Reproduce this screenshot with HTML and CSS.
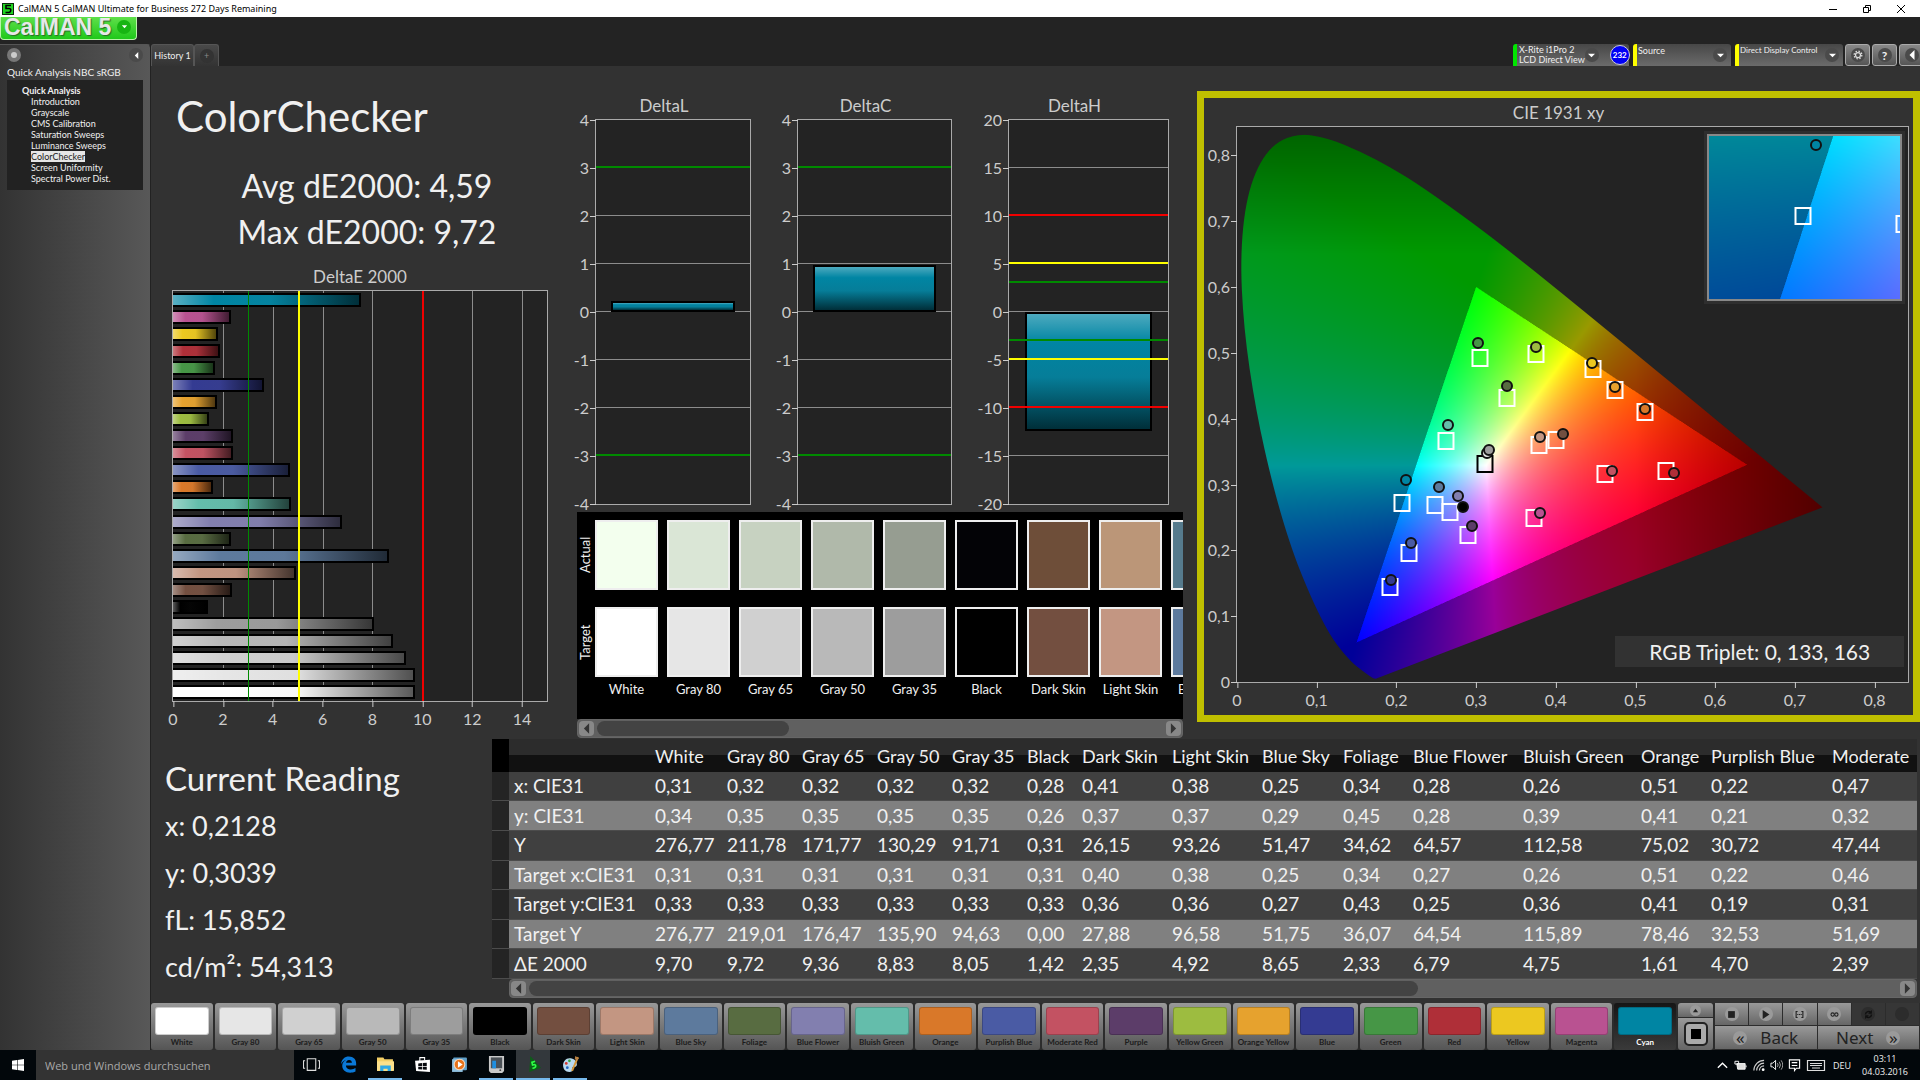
FILE: index.html
```html
<!DOCTYPE html>
<html lang="en">
<head>
  <meta charset="UTF-8" />
  <title>CalMAN 5 CalMAN Ultimate for Business 272 Days Remaining</title>
  <link rel="stylesheet" href="styles.css">
</head>
<body>

  <header class="titlebar">
    <svg class="titlebar-icon" viewBox="0 0 12 12"><rect width="12" height="12" fill="#0a2a0a"/><rect x="1" y="1" width="10" height="10" fill="#1fd41f"/><path d="M9 2.500H4v3h3.200q1.600 0 1.600 1.800T7 9.500H3.500" fill="none" stroke="#000" stroke-width="1.600"/></svg>
    <span class="titlebar-text">CalMAN 5 CalMAN Ultimate for Business 272 Days Remaining</span>
    <div class="window-buttons">
      <button aria-label="Minimize"><svg viewBox="0 0 10 10"><path d="M1 5.500h8"/></svg></button>
      <button aria-label="Restore"><svg viewBox="0 0 10 10"><path d="M1.500 3.500h5v5h-5zM3.500 3.500v-2h5v5h-2"/></svg></button>
      <button aria-label="Close"><svg viewBox="0 0 10 10"><path d="M1 1l8 8M9 1l-8 8"/></svg></button>
    </div>
  </header>

  <div class="logo-strip">
    <button class="logo">CalMAN 5 <span class="round"><svg viewBox="0 0 8 8"><path d="M1 2.500h6L4 6z"/></svg></span></button>
  </div>

  <div class="app">
    <aside class="sidebar">
      <div class="sidebar-tools">
        <button class="round record" aria-label="Record"><i></i></button>
        <button class="round" aria-label="Collapse"><svg viewBox="0 0 8 8"><path d="M6 0v8L2 4z"/></svg></button>
      </div>
      <h3>Quick Analysis NBC sRGB</h3>
      <nav class="tree">
        <strong>Quick Analysis</strong>
        <a href="#">Introduction</a>
        <a href="#">Grayscale</a>
        <a href="#">CMS Calibration</a>
        <a href="#">Saturation Sweeps</a>
        <a href="#">Luminance Sweeps</a>
        <a href="#" class="selected">ColorChecker</a>
        <a href="#">Screen Uniformity</a>
        <a href="#">Spectral Power Dist.</a>
      </nav>
    </aside>

    <main class="main">
      <div class="tabs">
        <button class="tab">History 1</button>
        <button class="tab tab-add" aria-label="Add history"><span class="round">+</span></button>
        <div class="devices">
          <div class="device green meter">
            <button class="device-name">X-Rite i1Pro 2<br>LCD Direct View</button>
            <span class="round"><svg viewBox="0 0 8 8"><path d="M0 2h8L4 6z"/></svg></span>
            <span class="badge">232</span>
          </div>
          <div class="device yellow source">
            <select aria-label="Source"><option>Source</option></select>
            <span class="round"><svg viewBox="0 0 8 8"><path d="M0 2h8L4 6z"/></svg></span>
          </div>
          <div class="device yellow display">
            <select aria-label="Display control"><option>Direct Display Control</option></select>
            <span class="round"><svg viewBox="0 0 8 8"><path d="M0 2h8L4 6z"/></svg></span>
          </div>
          <div class="tools">
            <button class="tool" aria-label="Settings"><span class="round"><svg viewBox="0 0 12 12"><circle cx="6" cy="6" r="3" fill="none" stroke="#ddd" stroke-width="1.500"/><circle cx="6" cy="6" r="4.600" fill="none" stroke="#ddd" stroke-width="1.600" stroke-dasharray="1.800 1.810"/></svg></span></button>
            <button class="tool" aria-label="Help"><span class="round">?</span></button>
            <button class="tool" aria-label="Back"><span class="round"><svg viewBox="0 0 8 8"><path d="M6 0v8L2 4z"/></svg></span></button>
          </div>
        </div>
      </div>

      <div class="workspace">
        <section class="summary">
          <h1>ColorChecker</h1>
          <p class="stat">Avg dE2000: 4,59</p>
          <p class="stat">Max dE2000: 9,72</p>
          <h2>DeltaE 2000</h2>
          <div class="plot" id="deltaE"></div>
        </section>

        <section class="middle">
          <div class="deltas" id="deltas"></div>
          <div class="swatches" id="swatches">
            <div class="swatch-names"><span>Actual</span><span>Target</span></div>
          </div>
          <div class="scrollbar short">
            <button aria-label="Scroll left"><svg viewBox="0 0 8 12"><path d="M7 0v12L1 6z"/></svg></button>
            <div class="track"><div class="thumb"></div></div>
            <button aria-label="Scroll right"><svg viewBox="0 0 8 12"><path d="M1 0v12l6-6z"/></svg></button>
          </div>
        </section>

        <section class="cie">
          <h2>CIE 1931 xy</h2>
          <div class="plot" id="cie">
            <canvas id="gamut"></canvas>
            <div class="inset" id="inset"><canvas id="zoom"></canvas></div>
            <div class="triplet">RGB Triplet: 0, 133, 163</div>
          </div>
        </section>
      </div>

      <div class="lower">
        <section class="reading">
          <h2>Current Reading</h2>
          <p>x: 0,2128</p>
          <p>y: 0,3039</p>
          <p>fL: 15,852</p>
          <p>cd/m²: 54,313</p>
        </section>
        <section class="results">
          <table id="results">
            <colgroup>
              <col class="w-gutter"><col class="w-label"><col class="w-72"><col class="w-75"><col class="w-75"><col class="w-75"><col class="w-75"><col class="w-55"><col class="w-90"><col class="w-90"><col class="w-81"><col class="w-70"><col class="w-110"><col class="w-118"><col class="w-70"><col class="w-121"><col>
            </colgroup>
            <thead></thead>
            <tbody></tbody>
          </table>
          <div class="scrollbar long">
            <button aria-label="Scroll left"><svg viewBox="0 0 8 12"><path d="M7 0v12L1 6z"/></svg></button>
            <div class="track"><div class="thumb"></div></div>
            <button aria-label="Scroll right"><svg viewBox="0 0 8 12"><path d="M1 0v12l6-6z"/></svg></button>
          </div>
        </section>
      </div>

      <div class="patchbar">
        <div class="patches" id="patches"></div>
        <div class="stepper">
          <button class="up" aria-label="Up"><span class="round"><svg viewBox="0 0 8 8"><path d="M1 6h6L4 2z"/></svg></span></button>
          <button class="window" aria-label="Pattern window"><i></i></button>
        </div>
        <div class="controls">
          <div class="transport">
            <button aria-label="Stop"><span class="round"><svg viewBox="0 0 8 8"><path d="M1 1h6v6H1z"/></svg></span></button>
            <button aria-label="Play"><span class="round"><svg viewBox="0 0 8 8"><path d="M1.500 0v8L7.500 4z"/></svg></span></button>
            <button aria-label="Read series"><span class="round"><svg viewBox="0 0 12 10"><path d="M3.500 1h-2v8h2M8.500 1h2v8h-2M3 5h1.500M5.300 5h1.500M7.500 5H9" fill="none" stroke="#222" stroke-width="1.500"/></svg></span></button>
            <button aria-label="Read continuous"><span class="round"><svg viewBox="0 0 12 8"><circle cx="3.500" cy="4" r="2.200" fill="none" stroke="#222" stroke-width="1.400"/><circle cx="8.500" cy="4" r="2.200" fill="none" stroke="#222" stroke-width="1.400"/></svg></span></button>
            <button class="off" aria-label="Refresh"><span class="round"><svg viewBox="0 0 12 12"><path d="M2 6a4 4 0 0 1 6.500-3M10 6a4 4 0 0 1-6.500 3" fill="none" stroke="#111" stroke-width="2"/><path d="M10.500 0v5h-5zM1.500 12V7h5z" fill="#111"/></svg></span></button>
            <button class="off" aria-label="Blank"><span class="round"></span></button>
          </div>
          <div class="steps">
            <button><span class="round">«</span>Back</button>
            <button>Next<span class="round">»</span></button>
          </div>
        </div>
      </div>
    </main>
  </div>

  <footer class="taskbar">
    <button class="start" aria-label="Start"><svg viewBox="0 0 12 12"><path d="M0 1.700l5-.7v4.700H0zM5.600.9L12 0v5.700H5.600zM0 6.300h5V11l-5-.7zM5.600 6.300H12V12l-6.400-.9z" fill="#fff"/></svg></button>
    <input class="search" type="text" aria-label="Search" placeholder="Web und Windows durchsuchen">
    <div class="apps">
      <button aria-label="Task view"><svg viewBox="0 0 16 16"><path d="M4 2.500h8v11H4zM2 4.500H.5v7H2M14 4.500h1.500v7H14" fill="none" stroke="#ddd"/></svg></button>
      <button aria-label="Edge"><svg viewBox="0 0 16 16"><path d="M1 7.500C1.500 3 4.500.5 8.300.5c4.500 0 6.900 3 6.900 6.600v1.800H5.600c.1 2.700 2.300 3.700 4.700 3.700 1.500 0 3-.4 4.300-1.200v3.200c-1.500.8-3.200 1.100-5 1.100-4.400 0-7.500-2.500-7.500-6.500C2.100 6.500 3.600 4.600 5.900 3.500 4 3.900 2.200 5.300 1 7.500zM5.700 6.400h5.500c0-1.700-.9-2.700-2.700-2.700S5.900 5 5.700 6.400z" fill="#0a78d7"/></svg></button>
      <button class="running" aria-label="Explorer"><svg viewBox="0 0 16 16"><path d="M0 1.500h6l1 1.500h8v11H0z" fill="#f3cf66"/><path d="M0 5h16v9H0z" fill="#fbe08b"/><path d="M3 14V9h10v5h-3v-2H6v2z" fill="#2fa9e6"/></svg></button>
      <button aria-label="Store"><svg viewBox="0 0 16 16"><path d="M1 4.500l14-1v11.500L2 14z" fill="#fff"/><path d="M5.500 5V1.500h4.500V4" fill="none" stroke="#fff"/><path d="M4 7l3.500-.3v2.600H4zM8.200 6.600L12 6.300v3H8.200zM4 10h3.500v2.700L4 12.500zM8.200 10H12v3l-3.800-.2z" fill="#05080c"/></svg></button>
      <button aria-label="Media player"><svg viewBox="0 0 16 16"><rect x="2" y="1.500" width="13" height="12" rx="1" fill="#5f9fc9"/><path d="M1 3h10v12H1z" fill="#8fc1e0"/><circle cx="8" cy="8" r="5" fill="#e8731b" stroke="#f5d9c0"/><path d="M6.500 5v6l4.500-3z" fill="#fff"/></svg></button>
      <button class="running" aria-label="Display utility"><svg viewBox="0 0 16 18"><path d="M0 0h16v16l-2 2H2l-2-2z" fill="#c9c9c9"/><path d="M2 1.500h12V13H2z" fill="#4b5157"/><path d="M3.500 5h4v8h-4z" fill="#1f8fe0"/><circle cx="12" cy="15" r="1" fill="#444"/></svg></button>
      <button class="running active" aria-label="CalMAN"><svg viewBox="0 0 16 16"><path d="M5 0l10 11-11 4z" fill="#0c5f17"/><path d="M9.500 5L6.500 6l.6 2.400q3-.8 3 1T7 11.500" fill="none" stroke="#2dff45" stroke-width="1.500"/></svg></button>
      <button class="running" aria-label="Paint"><svg viewBox="0 0 16 16"><path d="M7 2c4 0 7 2.300 7 6 0 2-1.500 2.400-3 2.400s-1.600 1.300-1 2.300c.4 1.500-1 2.300-3 2.300-4 0-6-3-6-6.300S3.500 2 7 2z" fill="#b8d8ee"/><circle cx="4" cy="7" r="1.300" fill="#d43a2f"/><circle cx="7" cy="4.500" r="1.300" fill="#3aa640"/><circle cx="5" cy="11" r="1.300" fill="#2568c0"/><path d="M15 1L9.500 14" stroke="#d69638" stroke-width="1.800"/><path d="M12.500 0L16 2l-1.500 2-2.500-1z" fill="#b57f43"/></svg></button>
    </div>
    <div class="tray">
      <svg viewBox="0 0 14 14"><path d="M2 10l5-5 5 5" fill="none" stroke="#fff" stroke-width="1.500"/></svg>
      <svg viewBox="0 0 14 14"><path d="M3 5.500h9v6H4z" fill="#ddd" stroke="#fff"/><path d="M1 3h4v3H1zM13 7.500v2" fill="none" stroke="#fff"/></svg>
      <svg viewBox="0 0 14 14"><path d="M2 13A11 11 0 0 1 13 2M5 13a8 8 0 0 1 8-8M8 13a5 5 0 0 1 5-5" fill="none" stroke="#ccc" stroke-width="1.300"/><circle cx="12" cy="12" r="1.500" fill="#fff"/></svg>
      <svg viewBox="0 0 14 14"><path d="M1 5h2l3-3v10L3 9H1z" fill="none" stroke="#fff"/><path d="M8 5q1.500 2 0 4M10 3.500q2.500 3.500 0 7M12 2q3.500 5 0 10" fill="none" stroke="#aaa"/></svg>
      <svg viewBox="0 0 14 14"><path d="M1.500 1.500h11v9H9l-2 2.500v-2.500H1.500zM4 4.500h6M4 7.500h6" fill="none" stroke="#fff" stroke-width="1.200"/></svg>
      <svg class="keyboard" viewBox="0 0 20 14"><path d="M1.500 2.500h17v10h-17zM4 5.500h12M4 7.500h12M6 10h8" fill="none" stroke="#ddd" stroke-width="1.200" /></svg>
      <span>DEU</span>
      <time>03:11<br>04.03.2016</time>
    </div>
  </footer>

  <script src="script.js"></script>
</body>
</html>
```
FILE: styles.css
```css
* {
  margin: 0;
  padding: 0;
  box-sizing: border-box;
}

body {
  display: flex;
  flex-direction: column;
  height: 100vh;
  overflow: hidden;
  font-family: Lato, 'Open Sans', sans-serif;
  font-size: 9px;
  background: #232323;
  color: #f0f0f0;
}

button, select, input {
  font: inherit;
  color: inherit;
  border: none;
  background: none;
}

h1, h2, h3 {
  font-weight: normal;
}

svg {
  display: block;
}

/* title bar */
.titlebar {
  display: flex;
  align-items: center;
  height: 17px;
  padding-left: 2px;
  background: #fff;
  color: #000;
  font-family: 'Open Sans', sans-serif;
}

.titlebar-icon {
  width: 12px;
  height: 12px;
  margin-right: 4px;
}

.titlebar-text {
  font-family: 'Noto Sans', sans-serif;
}

.window-buttons {
  display: flex;
  gap: 24px;
  margin-left: auto;
  padding-right: 14px;
}

.window-buttons svg {
  width: 10px;
  height: 10px;
  fill: none;
  stroke: #000;
}

.logo-strip {
  height: 27px;
}

.logo {
  display: flex;
  align-items: center;
  justify-content: space-between;
  width: 137px;
  height: 23px;
  padding: 0 5px 3px 3px;
  border: 1px solid #b9f5a9;
  border-top: none;
  border-radius: 0 0 4px 4px;
  background: linear-gradient(#5fe04a, #1fc81a);
  color: #e8e8e8;
  font-family: 'Liberation Sans', sans-serif;
  font-size: 23px;
  line-height: 20px;
  font-weight: bold;
  white-space: nowrap;
  text-shadow: 1px 1px 1px #2a6a2a;
}

.logo .round {
  background: #17b512;
}

.round {
  display: inline-flex;
  flex: none;
  align-items: center;
  justify-content: center;
  width: 14px;
  height: 14px;
  border-radius: 50%;
  background: #4a4a4a;
}

.round svg {
  width: 7px;
  height: 7px;
  fill: #fff;
}

/* sidebar */
.app {
  display: flex;
  flex: 1;
  min-height: 0;
}

.sidebar {
  width: 151px;
  padding: 3px 7px 0 7px;
  border-top: 1px solid #555;
  border-right: 1px solid #222;
  border-radius: 0 4px 0 0;
  background: linear-gradient(90deg, #333, #585858);
}

.sidebar-tools {
  display: flex;
  justify-content: space-between;
}

.record {
  background: #777;
}

.record i {
  width: 6px;
  height: 6px;
  border-radius: 50%;
  background: #ccc;
}

.sidebar h3 {
  margin: 2px 0 0;
  font-size: 10px;
  line-height: 16px;
  white-space: nowrap;
}

.tree {
  display: flex;
  flex-direction: column;
  align-items: flex-start;
  height: 110px;
  padding: 5px 0 0 15px;
  background: #222;
  line-height: 11px;
}

.tree a {
  margin-left: 9px;
  color: #f0f0f0;
  text-decoration: none;
}

.tree .selected {
  background: #e6e6e6;
  color: #222;
}

/* tabs and device row */
.main {
  display: flex;
  flex: 1;
  flex-direction: column;
  min-width: 0;
}

.tabs {
  display: flex;
  height: 22px;
}

.tab {
  width: 43px;
  border: 1px solid #555;
  border-bottom: none;
  border-radius: 3px 3px 0 0;
  background: linear-gradient(#494949, #333);
  white-space: nowrap;
}

.tab-add {
  width: 25px;
  color: #888;
}

.tab-add .round {
  background: #333;
}

.devices {
  display: flex;
  gap: 4px;
  margin-left: auto;
}

.device {
  display: flex;
  align-items: center;
  padding-right: 4px;
  border-left: 4px solid #ffff00;
  border-radius: 3px 3px 0 0;
  background: linear-gradient(#474747, #6b6b6b);
}

.device.green {
  border-color: #00e600;
}

.meter {
  width: 116px;
  padding-right: 1px;
}

.source {
  width: 98px;
}

.display {
  width: 108px;
}

.device-name {
  margin-right: auto;
  padding-left: 2px;
  line-height: 10px;
  text-align: left;
  white-space: nowrap;
}

.device select {
  flex: 1;
  min-width: 0;
  height: 22px;
  padding: 0 0 10px 1px;
  appearance: none;
  outline: none;
}

.display select {
  font-size: 8px;
}

.badge {
  display: flex;
  flex: none;
  align-items: center;
  justify-content: center;
  width: 20px;
  height: 20px;
  margin-left: 11px;
  border: 1px solid #ccd;
  border-radius: 50%;
  background: #0000f5;
  color: #fff;
  font-size: 8px;
  font-weight: bold;
}

.tools {
  display: flex;
  gap: 2px;
  margin-left: -2px;
  margin-right: -4px;
}

.tool {
  width: 25px;
  border: 1px solid #aaa;
  border-radius: 3px;
  background: linear-gradient(#888, #555);
  font-size: 12px;
  font-weight: bold;
}

.tool .round svg {
  width: 10px;
  height: 10px;
}

/* workspace */
.workspace {
  display: grid;
  flex: 673;
  grid-template-columns: 426fr 606fr 737fr;
  min-height: 0;
  background: #323232;
}

.summary {
  display: flex;
  flex-direction: column;
  min-width: 0;
  padding: 24px 29px 37px 21px;
}

h1 {
  padding-left: 4px;
  font-size: 42px;
  line-height: 52px;
  margin-bottom: 21px;
}

.stat {
  padding-left: 14px;
  font-size: 32px;
  line-height: 46px;
  text-align: center;
}

.summary h2 {
  margin-top: 9px;
}

.workspace h2 {
  color: #ccc;
  font-size: 17px;
  line-height: 26px;
  text-align: center;
}

.plot {
  position: relative;
  flex: 1;
  min-height: 0;
  border: 1px solid #aaa;
  background: #232323;
}

.line {
  position: absolute;
  background: #8c8c8c;
}

.line.v {
  top: 0;
  bottom: 0;
  width: 1px;
}

.line.h {
  left: 0;
  right: 0;
  height: 1px;
}

.line.good {
  background: #008a00;
}

.line.warn {
  background: #ffff00;
}

.line.bad {
  background: #f00000;
}

.line.v.warn, .line.v.bad {
  width: 2px;
}

.line.h.warn, .line.h.bad, .line.h.good {
  height: 2px;
}

.tick {
  position: absolute;
  color: #ccc;
  font-size: 16px;
  line-height: 20px;
}

.tick.x {
  top: 100%;
  padding-top: 8px;
  transform: translateX(-50%);
}

.tick.y {
  right: 100%;
  padding-right: 7px;
  transform: translateY(50%);
}

.tick::after {
  content: '';
  position: absolute;
  background: #ccc;
}

.tick.x::after {
  top: 0;
  left: 50%;
  width: 1px;
  height: 6px;
}

.tick.y::after {
  top: 50%;
  right: 0;
  width: 6px;
  height: 1px;
}

.bars {
  display: flex;
  flex-direction: column;
  justify-content: space-around;
  position: relative;
  height: 100%;
}

.hbar {
  height: 14px;
  border: 2px solid #000;
  border-left: none;
  background-image: linear-gradient(90deg, rgba(255,255,255,.35), rgba(255,255,255,0) 22%, rgba(90,90,90,.05) 52%, rgba(0,0,0,.65));
}

/* delta charts */
.middle {
  display: flex;
  flex-direction: column;
  min-width: 0;
}

.deltas {
  display: grid;
  grid-template-columns: 174fr 173fr 189fr;
  gap: 28px;
  flex: 1;
  padding: 27px 14px 7px 0;
}

.delta {
  display: flex;
  flex-direction: column;
}

.delta .plot {
  margin-left: 18px;
}

.delta:last-child .plot {
  margin-left: 28px;
}

.vbar {
  position: absolute;
  left: 10%;
  right: 10%;
  border: 2px solid #000;
  background: linear-gradient(rgba(255,255,255,.3), rgba(255,255,255,0) 25%, rgba(60,60,60,.1) 55%, rgba(0,0,0,.65)) #0085a3;
}

/* actual / target swatches */
.swatches {
  display: flex;
  gap: 9px;
  height: 207px;
  padding-top: 8px;
  overflow: hidden;
  background: #000;
}

.swatch-names {
  display: flex;
  flex: none;
  flex-direction: column;
  gap: 17px;
  width: 9px;
}

.swatch-names span {
  height: 70px;
  writing-mode: vertical-rl;
  transform: rotate(180deg);
  font-size: 13px;
  line-height: 16px;
  text-align: center;
}

.swatch {
  display: flex;
  flex: none;
  flex-direction: column;
  width: 63px;
  font-size: 13px;
  line-height: 24px;
  text-align: center;
  white-space: nowrap;
}

.swatch i {
  height: 70px;
  border: 2px solid #eee;
}

.swatch i + i {
  margin-top: 17px;
}

.scrollbar {
  display: flex;
  height: 19px;
  padding: 1px;
  border: 1px solid #666;
  border-radius: 4px;
  background: #606060;
}

.middle .scrollbar {
  margin-bottom: 1px;
}

.scrollbar button {
  display: flex;
  align-items: center;
  justify-content: center;
  width: 15px;
  border-radius: 4px;
  background: #888;
}

.scrollbar svg {
  width: 7px;
  height: 11px;
  fill: #333;
}

.track {
  flex: 1;
  padding: 0 3px;
}

.thumb {
  height: 100%;
  border-radius: 8px;
  background: #434343;
}

.short .thumb {
  width: 34%;
}

.long .thumb {
  width: 65%;
}

/* CIE chart */
.cie {
  display: flex;
  flex-direction: column;
  min-width: 0;
  margin: 25px 0 17px 14px;
  padding: 0 4px 32px 32px;
  border: 7px solid #bfbf00;
}

.cie h2 {
  margin-left: -28px;
  padding-top: 2px;
}

#gamut, #zoom {
  display: block;
  width: 100%;
  height: 100%;
}

#cie > canvas {
  position: absolute;
  inset: 0;
}

.inset {
  position: absolute;
  top: 7px;
  right: 6px;
  width: 29%;
  height: 30%;
  overflow: hidden;
  border: 2px solid #888;
  outline: 3px solid #2e2e2e;
}

.triplet {
  position: absolute;
  right: 4px;
  bottom: 15px;
  width: 43%;
  background: #323232;
  font-size: 21px;
  line-height: 31px;
  text-align: center;
}

.target, .measured {
  position: absolute;
  transform: translate(-50%, 50%);
}

.target {
  width: 17px;
  height: 18px;
  border: 2px solid #fff;
}

.target.white {
  border-color: #000;
}

.measured {
  width: 12px;
  height: 12px;
  border: 2px solid #111;
  border-radius: 50%;
}

/* reading and results table */
.lower {
  display: flex;
  flex: 264;
  min-height: 0;
  background: #323232;
}

.reading {
  width: 341px;
  padding: 16px 0 0 14px;
  font-size: 27px;
  line-height: 47px;
}

.reading h2 {
  font-size: 33px;
}

.results {
  flex: 1;
  min-width: 0;
  padding-right: 3px;
}

.results table {
  width: 100%;
  height: 240px;
  table-layout: fixed;
  border-collapse: collapse;
  font-size: 19px;
  text-align: left;
}

.results th, .results td {
  overflow: hidden;
  padding-left: 5px;
  font-weight: normal;
  line-height: 20px;
  white-space: nowrap;
}

.results thead th {
  height: 33px;
  background: linear-gradient(#2c2c2c 50%, #111 50%);
  font-size: 18px;
}

.results thead th:first-child {
  background: #000;
}

.results tbody tr {
  background: #404040;
  border-bottom: 1px solid #4c4c4c;
}

.results tbody tr:nth-child(even) {
  background: #808080;
}

.results tbody td:first-child {
  background: #242424;
}

.results .scrollbar {
  margin-left: 17px;
}

.w-gutter { width: 17px; }
.w-label { width: 141px; }
.w-55 { width: 55px; }
.w-70 { width: 70px; }
.w-72 { width: 72px; }
.w-75 { width: 75px; }
.w-81 { width: 81px; }
.w-90 { width: 90px; }
.w-110 { width: 110px; }
.w-118 { width: 118px; }
.w-121 { width: 121px; }

/* patch bar */
.patchbar {
  display: flex;
  gap: 2px;
  height: 47px;
  padding: 0 1px 0 0;
  background: #2c2c2c;
}

.patches {
  display: flex;
  flex: 1;
  gap: 2px;
  min-width: 0;
}

.patch {
  display: flex;
  flex: 1;
  flex-direction: column;
  min-width: 0;
  padding: 4px 4px 1px;
  border-radius: 3px;
  background: linear-gradient(#999, #555);
  color: #1c1c1c;
  font-size: 8px;
  font-weight: bold;
  line-height: 14px;
  text-align: center;
  white-space: nowrap;
}

.patch i {
  height: 28px;
  border: 1px solid rgba(0,0,0,.2);
  border-radius: 3px;
}

.patch.current {
  background: linear-gradient(#161616, #3a3a3a);
  color: #fff;
}

.stepper {
  display: flex;
  flex-direction: column;
  gap: 1px;
  width: 35px;
}

.stepper button, .transport button, .steps button {
  display: flex;
  align-items: center;
  justify-content: center;
  background: linear-gradient(#999, #666);
  color: #222;
}

.stepper .round, .controls .round {
  background: #9a9a9a;
}

.stepper svg, .controls svg {
  fill: #222;
}

.stepper .up {
  height: 14px;
  border-radius: 3px 3px 0 0;
}

.up .round {
  width: 11px;
  height: 11px;
}

.stepper .window {
  flex: 1;
  border-radius: 0 0 3px 3px;
}

.window i {
  width: 20px;
  height: 20px;
  border: 5px solid #aaa;
  outline: 2px solid #222;
  border-radius: 3px;
  background: #000;
}

.controls {
  width: 204px;
}

.transport, .steps {
  display: grid;
  grid-template-columns: repeat(6, 1fr);
  gap: 1px;
  height: 22px;
  margin-bottom: 1px;
}

.transport svg {
  width: 9px;
  height: 9px;
}

.transport .off {
  background: #363636;
}

.transport .off .round {
  background: #2c2c2c;
}

.steps {
  grid-template-columns: 1fr 1fr;
  height: 23px;
}

.steps button {
  gap: 13px;
  font-family: 'Noto Sans', sans-serif;
  font-size: 17px;
}

.steps .round {
  line-height: 14px;
}

/* taskbar */
.taskbar {
  display: flex;
  height: 30px;
  background: #02070b;
}

.start {
  display: flex;
  align-items: center;
  justify-content: center;
  width: 36px;
}

.start svg {
  width: 12px;
  height: 12px;
}

.search {
  width: 258px;
  padding-left: 9px;
  background: #333;
  font-family: 'Open Sans', sans-serif;
  font-size: 11px;
}

.search::placeholder {
  color: #a8a8a8;
}

.apps {
  display: flex;
  gap: 3px;
}

.apps button {
  display: flex;
  align-items: center;
  justify-content: center;
  width: 34px;
  border-bottom: 2px solid transparent;
}

.apps svg {
  width: 17px;
  height: 17px;
}

.apps .running {
  border-color: #76b9ed;
}

.apps .active {
  background: #33383c;
}

.tray {
  display: flex;
  align-items: center;
  gap: 5px;
  margin-left: auto;
  padding-right: 12px;
  font-family: 'Open Sans', sans-serif;
}

.tray svg {
  width: 13px;
  height: 14px;
}

.tray .keyboard {
  width: 20px;
}

.tray span {
  margin: 0 6px 0 2px;
}

.tray time {
  line-height: 13px;
  text-align: center;
}
```
FILE: script.js
```js
const patches = [
  ['White', '#ffffff', '#f3ffee', '0,31 0,34 276,77 0,31 0,33 276,77 9,70'],
  ['Gray 80', '#e6e6e6', '#dae6d6', '0,32 0,35 211,78 0,31 0,33 219,01 9,72'],
  ['Gray 65', '#d0d0d0', '#c7d2c1', '0,32 0,35 171,77 0,31 0,33 176,47 9,36'],
  ['Gray 50', '#b9b9b9', '#b0b9aa', '0,32 0,35 130,29 0,31 0,33 135,90 8,83'],
  ['Gray 35', '#9d9d9d', '#969d91', '0,32 0,35 91,71 0,31 0,33 94,63 8,05'],
  ['Black', '#000000', '#030306', '0,28 0,26 0,31 0,31 0,33 0,00 1,42'],
  ['Dark Skin', '#734f40', '#6e4e39', '0,41 0,37 26,15 0,40 0,36 27,88 2,35'],
  ['Light Skin', '#c39682', '#bb9678', '0,38 0,37 93,26 0,38 0,36 96,58 4,92'],
  ['Blue Sky', '#5d7a9d', '#567b8d', '0,25 0,29 51,47 0,25 0,27 51,75 8,65'],
  ['Foliage', '#586c41', '', '0,34 0,45 34,62 0,34 0,43 36,07 2,33'],
  ['Blue Flower', '#827faf', '', '0,28 0,28 64,57 0,27 0,25 64,54 6,79'],
  ['Bluish Green', '#64bdab', '', '0,26 0,39 112,58 0,26 0,36 115,89 4,75'],
  ['Orange', '#d97829', '', '0,51 0,41 75,02 0,51 0,41 78,46 1,61'],
  ['Purplish Blue', '#4a5ba4', '', '0,22 0,21 30,72 0,22 0,19 32,53 4,70'],
  ['Moderate Red', '#c35262', '', '0,47 0,32 47,44 0,46 0,31 51,69 2,39', 'Moderate'],
  ['Purple', '#5c3d69', '', '2,40'],
  ['Yellow Green', '#9dbc40', '', '1,45'],
  ['Orange Yellow', '#e6a22e', '', '1,76'],
  ['Blue', '#343b92', '', '3,64'],
  ['Green', '#469646', '', '1,69'],
  ['Red', '#af2f38', '', '1,89'],
  ['Yellow', '#ecc820', '', '1,81'],
  ['Magenta', '#b95291', '', '2,33'],
  ['Cyan', '#0085a3', '', '7,55'],
];

const el = (html) => {
  const t = document.createElement('template');
  t.innerHTML = html.trim();
  return t.content.firstChild;
};
const byId = (id) => document.getElementById(id);

// DeltaE bars, last patch on top
function drawDeltaE() {
  const plot = byId('deltaE');
  for (let v = 0; v < 15; v += 2) {
    const at = v / 15 * 100;
    if (v) plot.append(el(`<div class="line v" style="left:${at}%"></div>`));
    plot.append(el(`<div class="tick x" style="left:${at}%">${v}</div>`));
  }
  const bars = el('<div class="bars"></div>');
  [...patches].reverse().forEach(p => {
    const value = parseFloat(p[3].split(' ').pop().replace(',', '.'));
    bars.append(el(`<div class="hbar" style="width:${value / 15 * 100}%;background-color:${p[1]}"></div>`));
  });
  plot.append(bars);
  [[3, 'good'], [5, 'warn'], [10, 'bad']].forEach(([v, c]) => {
    plot.append(el(`<div class="line v ${c}" style="left:${v / 15 * 100}%"></div>`));
  });
}

function drawDelta(title, max, step, value, limits) {
  const chart = el(`<div class="delta"><h2>${title}</h2><div class="plot"></div></div>`);
  const plot = chart.querySelector('.plot');
  const pos = v => (v + max) / (2 * max) * 100;
  for (let v = -max; v <= max; v += step) {
    if (Math.abs(v) < max) plot.append(el(`<div class="line h" style="bottom:${pos(v)}%"></div>`));
    plot.append(el(`<div class="tick y" style="bottom:${pos(v)}%">${v}</div>`));
  }
  const low = pos(Math.min(0, value));
  const high = 100 - pos(Math.max(0, value));
  plot.append(el(`<div class="vbar" style="bottom:${low}%;top:${high}%"></div>`));
  limits.forEach(([v, c]) => {
    plot.append(el(`<div class="line h ${c}" style="bottom:${pos(v)}%"></div>`));
    plot.append(el(`<div class="line h ${c}" style="bottom:${pos(-v)}%"></div>`));
  });
  byId('deltas').append(chart);
}

function drawSwatches() {
  patches.slice(0, 9).forEach(([name, target, actual]) => {
    byId('swatches').append(el(`<div class="swatch"><i style="background:${actual}"></i><i style="background:${target}"></i>${name}</div>`));
  });
  patches.forEach(([name, color]) => {
    const current = name === 'Cyan' ? ' current' : '';
    byId('patches').append(el(`<button class="patch${current}"><i style="background:${color}"></i>${name}</button>`));
  });
}

function drawTable() {
  const labels = ['x: CIE31', 'y: CIE31', 'Y', 'Target x:CIE31', 'Target y:CIE31', 'Target Y', 'ΔE 2000'];
  const cols = patches.slice(0, 15);
  const head = cols.map(p => `<th>${p[4] || p[0]}</th>`).join('');
  document.querySelector('#results thead').innerHTML = `<tr><th></th><th></th>${head}</tr>`;
  document.querySelector('#results tbody').innerHTML = labels.map((label, i) => {
    const cells = cols.map(p => `<td>${p[3].split(' ')[i]}</td>`).join('');
    return `<tr><td></td><th>${label}</th>${cells}</tr>`;
  }).join('');
}

// spectral locus, CIE 1931 2 degree observer
const locus = [
  [.1741, .0050], [.1714, .0051], [.1644, .0109], [.1566, .0177], [.1440, .0297], [.1241, .0578],
  [.1096, .0868], [.0913, .1327], [.0687, .2007], [.0454, .2950], [.0235, .4127], [.0082, .5384],
  [.0039, .6548], [.0139, .7502], [.0389, .8120], [.0743, .8338], [.1142, .8262], [.1547, .8059],
  [.1929, .7816], [.2296, .7543], [.3016, .6923], [.3731, .6245], [.4441, .5547], [.5125, .4866],
  [.5752, .4242], [.6270, .3725], [.6658, .3340], [.6915, .3083], [.7190, .2809], [.7347, .2653],
];

function xyToColor(x, y) {
  const X = x / y, Z = (1 - x - y) / y;
  const rgb = [
    3.2406 * X - 1.5372 - 0.4986 * Z,
    -0.9689 * X + 1.8758 + 0.0415 * Z,
    0.0557 * X - 0.2040 + 1.0570 * Z,
  ];
  const outside = Math.min(...rgb) < 0;
  const max = Math.max(...rgb);
  // the ends of the spectrum fade out
  let k = outside ? 0.6 : 1;
  if (x > 0.5) k *= 1 - (x - 0.5) * 2;
  if (y > 0.65) k *= 1 - (y - 0.65) * 1.9;
  return rgb.map(c => Math.max(0, c) / max * 255 * k);
}

function paint(canvas, x0, x1, y0, y1) {
  const w = canvas.width = canvas.clientWidth * 2;
  const h = canvas.height = canvas.clientHeight * 2;
  const ctx = canvas.getContext('2d');
  const img = ctx.createImageData(w, h);
  for (let j = 0; j < h; j++) {
    for (let i = 0; i < w; i++) {
      const x = x0 + (i + .5) / w * (x1 - x0);
      const y = y1 - (j + .5) / h * (y1 - y0);
      const c = xyToColor(x, y);
      const o = (j * w + i) * 4;
      img.data[o] = c[0];
      img.data[o + 1] = c[1];
      img.data[o + 2] = c[2];
      img.data[o + 3] = 255;
    }
  }
  ctx.putImageData(img, 0, 0);
  const pts = locus.map(([x, y]) => [(x - x0) / (x1 - x0) * w, (y1 - y) / (y1 - y0) * h]);
  ctx.globalCompositeOperation = 'destination-in';
  ctx.beginPath();
  ctx.moveTo(...pts[0]);
  for (let i = 1; i < pts.length - 1; i++) {
    const mx = (pts[i][0] + pts[i + 1][0]) / 2, my = (pts[i][1] + pts[i + 1][1]) / 2;
    ctx.quadraticCurveTo(...pts[i], mx, my);
  }
  ctx.lineTo(...pts[pts.length - 1]);
  ctx.closePath();
  ctx.fill();
}

const targets = [
  [.3046, .4927], [.3750, .4976], [.4471, .4760], [.4745, .4433], [.5123, .4100], [.3389, .4316],
  [.2626, .3663], [.3784, .3607], [.4000, .3675], [.4612, .3157], [.5379, .3206], [.2073, .2725],
  [.2487, .2688], [.2679, .2577], [.2894, .2238], [.3732, .2497], [.2155, .1955], [.1922, .1437],
  [.3109, .3317, 'white'],
];
const measured = [
  [.3028, .5142, '#469646'], [.3750, .5093, '#9dbc40'], [.4454, .4840, '#ecc820'], [.4739, .4476, '#e6a22e'],
  [.5118, .4150, '#d97829'], [.3383, .4501, '#586c41'], [.2649, .3909, '#64bdab'], [.3796, .3724, '#c39682'],
  [.4087, .3767, '#734f40'], [.4704, .3200, '#c35262'], [.5478, .3182, '#af2f38'], [.3133, .3484, '#e6e6e6'],
  [.3168, .3527, '#9d9d9d'], [.2126, .3065, '#0085a3'], [.2539, .2966, '#5d7a9d'], [.2778, .2830, '#827faf'],
  [.2830, .2657, '#000000'], [.2952, .2374, '#5c3d69'], [.3802, .2565, '#b95291'], [.2189, .2115, '#4a5ba4'],
  [.1928, .1554, '#343b92'],
];

function addMarkers(box, x0, x1, y0, y1) {
  const place = (x, y) => `left:${(x - x0) / (x1 - x0) * 100}%;bottom:${(y - y0) / (y1 - y0) * 100}%`;
  const inside = ([x, y]) => x > x0 && x < x1 + .005 && y > y0 && y < y1;
  targets.filter(inside).forEach(([x, y, c]) => {
    box.append(el(`<div class="target ${c || ''}" style="${place(x, y)}"></div>`));
  });
  measured.filter(inside).forEach(([x, y, c]) => {
    box.append(el(`<div class="measured" style="${place(x, y)};background:${c}"></div>`));
  });
}

function drawCie() {
  const plot = byId('cie');
  for (let i = 0; i <= 8; i++) {
    const label = i ? `0,${i}` : '0';
    plot.append(el(`<div class="tick x" style="left:${i / 8.42 * 100}%">${label}</div>`));
    plot.append(el(`<div class="tick y" style="bottom:${i / 8.43 * 100}%">${label}</div>`));
  }
  addMarkers(plot, 0, .842, 0, .843);
  addMarkers(byId('inset'), .169, .247, .233, .311);
}

function paintCie() {
  paint(byId('gamut'), 0, .842, 0, .843);
  paint(byId('zoom'), .169, .247, .233, .311);
}

drawDeltaE();
drawDelta('DeltaL', 4, 1, 0.22, [[3, 'good']]);
drawDelta('DeltaC', 4, 1, 0.97, [[3, 'good']]);
drawDelta('DeltaH', 20, 5, -12.4, [[3, 'good'], [5, 'warn'], [10, 'bad']]);
drawSwatches();
drawTable();
drawCie();
paintCie();
window.addEventListener('resize', paintCie);
```
